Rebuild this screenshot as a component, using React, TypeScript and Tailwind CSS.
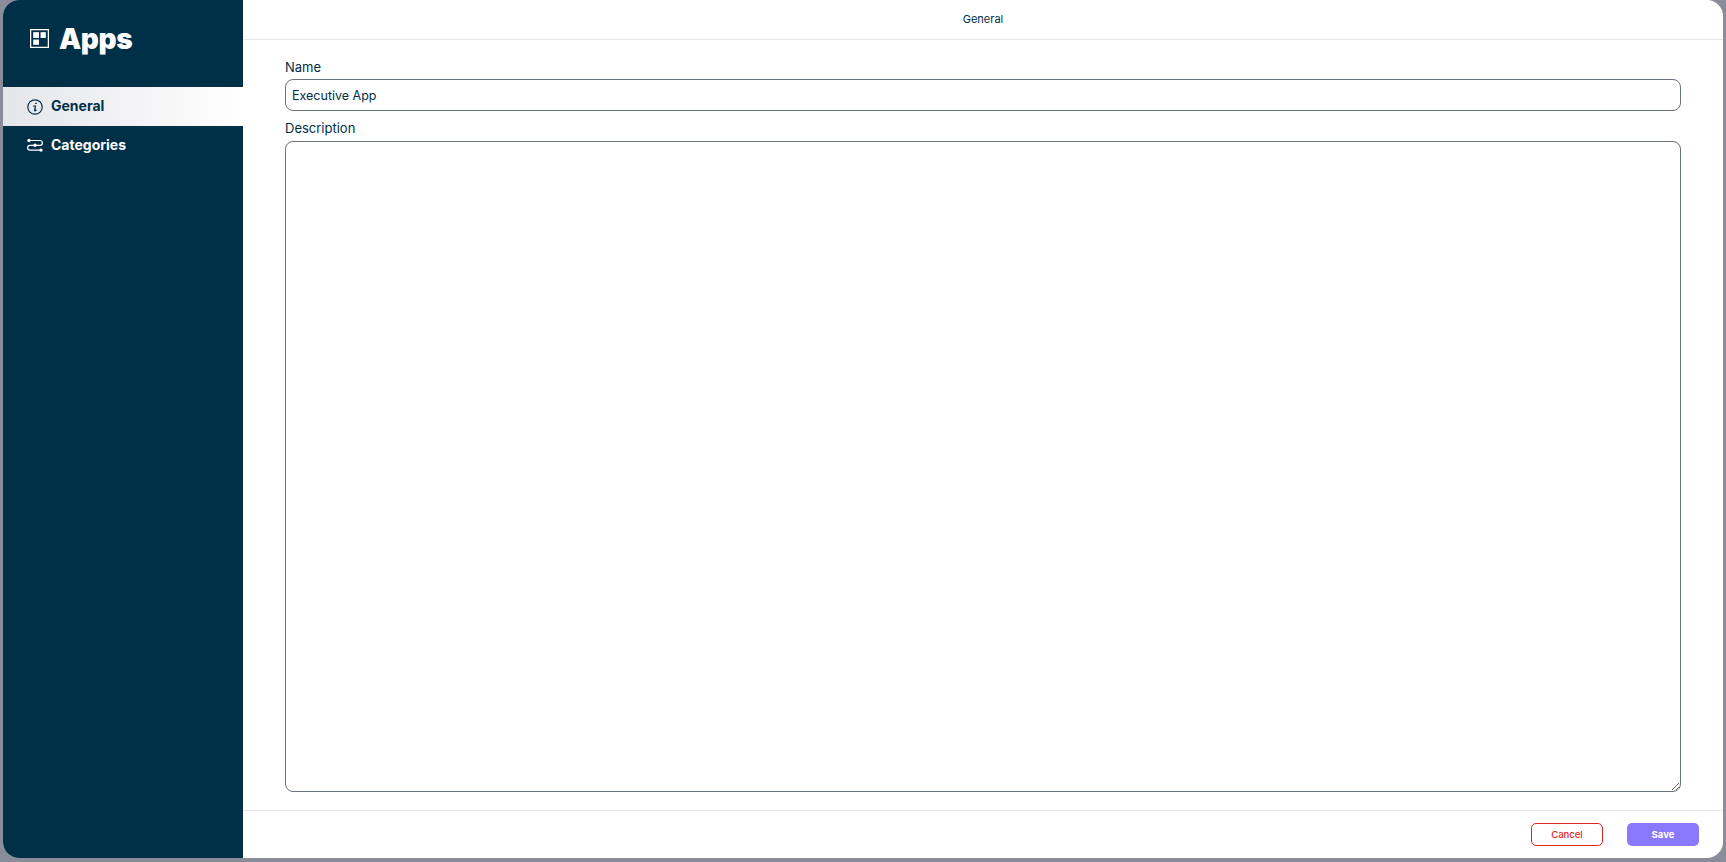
import React from "react";

function GridIcon() {
  return (
    <svg width="19" height="19" viewBox="0 0 18 18" className="shrink-0">
      <rect x="0.6" y="0.6" width="16.8" height="16.8" fill="none" stroke="#fff" strokeWidth="1.2" />
      <rect x="3" y="3" width="5.5" height="5.5" fill="#fff" />
      <rect x="10" y="3" width="5" height="5.5" fill="#fff" />
      <rect x="3" y="10" width="5.5" height="5" fill="#fff" />
    </svg>
  );
}

function InfoIcon() {
  return (
    <svg width="16" height="16" viewBox="0 0 16 16" className="shrink-0" fill="none">
      <circle cx="8" cy="8" r="7.2" stroke="#002f48" strokeWidth="1.2" />
      <path d="M9 3.8v1.3" stroke="#002f48" strokeWidth="1.6" />
      <path d="M6.6 7h2L7.5 11.3c-.1.5.3.6.7.4l1-.7" stroke="#002f48" strokeWidth="1.2" strokeLinecap="round" strokeLinejoin="round" />
    </svg>
  );
}

function SlidersIcon() {
  return (
    <svg width="16" height="15" viewBox="0 0 16 14" className="shrink-0" fill="none">
      <path d="M2 2h11a2.4 2.4 0 0 1 0 4.8H3a2.4 2.4 0 0 0 0 4.8h10.5" stroke="#fff" strokeWidth="1.2" />
      <circle cx="2" cy="2" r="1.7" fill="#fff" />
      <circle cx="8" cy="6.8" r="1.7" fill="#fff" />
      <circle cx="14" cy="11.6" r="1.7" fill="#fff" />
    </svg>
  );
}

export default function App() {
  return (
    <div
      className="h-[862px] w-[1726px] overflow-hidden bg-[#8b8c99] pl-[3px] text-[#002f48]"
      style={{ fontFamily: 'Inter, "Open Sans", sans-serif' }}
    >
      <div className="flex h-[858px] w-[1720px] overflow-hidden rounded-2xl bg-white">
        <aside className="flex w-[240px] shrink-0 flex-col bg-[#002f48] text-white">
          <div className="flex h-[87px] items-start gap-[10px] pl-[27px] pt-[20px]">
            <span className="mt-[9px]"><GridIcon /></span>
            <span className="text-[28px] leading-[38px] font-black tracking-[-0.4px]">
              Apps
            </span>
          </div>
          <div className="flex h-[39px] items-center gap-[8px] bg-gradient-to-r from-[#e5e6ea] to-white pl-[24px] text-[14px] font-bold text-[#002f48]">
            <InfoIcon />
            <span className="pb-[2px]">General</span>
          </div>
          <div className="flex h-[39px] items-center gap-[8px] pb-[1px] pl-[24px] text-[14px] font-bold">
            <SlidersIcon />
            <span className="pb-[1px]">Categories</span>
          </div>
        </aside>
        <main className="flex min-w-0 flex-1 flex-col">
          <header className="flex h-[40px] shrink-0 items-center justify-center border-b border-[#e5e7eb] text-[11px]">
            General
          </header>
          <div className="flex min-h-0 flex-1 flex-col pl-[42px] pr-[42px] pt-[18px]">
            <label className="text-[13px] leading-[18px]">Name</label>
            <input
              readOnly
              value="Executive App"
              className="mt-[3px] h-[32px] w-full rounded-lg border border-[#6b7280] px-[6px] text-[12.5px] text-[#002f48] outline-none"
            />
            <label className="mt-[8px] text-[13px] leading-[18px]">Description</label>
            <textarea
              readOnly
              className="mt-[4px] h-[651px] w-full rounded-lg border border-[#6b7280] px-[6px] text-[13px] outline-none"
            />
          </div>
          <footer className="flex h-[48px] shrink-0 items-center justify-end gap-[24px] border-t border-[#e5e7eb] pr-[24px]">
            <button className="h-[23px] w-[72px] rounded-[5px] border border-[#dc2626] pt-[1px] text-[9.5px] font-medium text-[#dc2626]">
              Cancel
            </button>
            <button className="h-[23px] w-[72px] rounded-[5px] bg-[#8a78ff] pt-[1px] text-[9.5px] font-bold text-white">
              Save
            </button>
          </footer>
        </main>
      </div>
    </div>
  );
}
